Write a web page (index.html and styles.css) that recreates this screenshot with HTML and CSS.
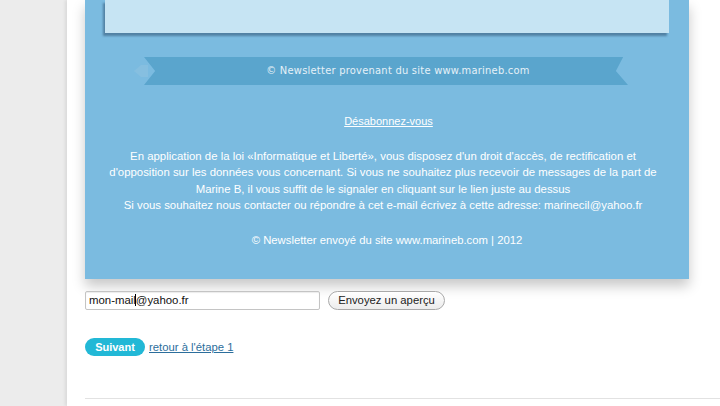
FILE: index.html
```html
<!DOCTYPE html>
<html lang="fr">
<head>
<meta charset="utf-8">
<link rel="stylesheet" href="styles.css">
</head>
<body>
<div class="page">
  <div class="gutter"></div>
  <div class="panel">
    <div class="mail">
      <div class="sheet"></div>
      <div class="ribbon-row">
        <div class="ribbon-fold"></div>
        <div class="ribbon">© Newsletter provenant du site www.marineb.com</div>
      </div>
      <p class="unsub"><a href="#">Désabonnez-vous</a></p>
      <p class="legal">En application de la loi «Informatique et Liberté», vous disposez d'un droit d'accès, de rectification et<br>d'opposition sur les données vous concernant. Si vous ne souhaitez plus recevoir de messages de la part de<br>Marine B, il vous suffit de le signaler en cliquant sur le lien juste au dessus<br>Si vous souhaitez nous contacter ou répondre à cet e-mail écrivez à cette adresse: marinecil@yahoo.fr</p>
      <p class="sent">© Newsletter envoyé du site www.marineb.com | 2012</p>
    </div>
    <div class="preview">
      <div class="field">mon-mail<span class="caret"></span>@yahoo.fr</div>
      <button class="btn-preview">Envoyez un aperçu</button>
    </div>
    <div class="nav">
      <button class="btn-next">Suivant</button>
      <a class="back" href="#">retour à l'étape 1</a>
    </div>
    <div class="rule"></div>
  </div>
</div>
</body>
</html>
```

FILE: styles.css
```css
html, body {
  margin: 0;
  padding: 0;
  height: 100%;
  overflow: hidden;
}
body {
  background: #ececec;
  font-family: "Liberation Sans", Arial, sans-serif;
}
.page {
  display: flex;
  height: 406px;
}
.gutter {
  width: 67px;
  flex: none;
}
.panel {
  flex: 1;
  background: #fff;
  box-shadow: -2px 0 3px rgba(0,0,0,0.08);
  padding-left: 18px;
  display: flex;
  flex-direction: column;
}
.mail {
  width: 604px;
  height: 279px;
  background: #7bbbe0;
  box-shadow: 0 7px 12px rgba(0,0,0,0.22);
  padding: 0 20px;
  box-sizing: border-box;
  display: flex;
  flex-direction: column;
  align-items: stretch;
}
.sheet {
  height: 33px;
  background: #c6e4f3;
  box-shadow: -2px 3px 2px rgba(30,60,90,0.45);
}
.ribbon-row {
  margin-top: 24px;
  height: 28px;
  display: flex;
  padding-left: 39px;
  position: relative;
}
.ribbon-fold {
  position: absolute;
  left: 29px;
  top: 8px;
  width: 14px;
  height: 12px;
  background: #86bfe0;
  clip-path: polygon(0 50%, 50% 0, 100% 0, 100% 100%, 50% 100%);
}
.ribbon {
  width: 484px;
  height: 28px;
  background: #5aa5cd;
  clip-path: polygon(0 0, 99% 0, 97.5% 50%, 100% 100%, 0 100%, 2.3% 50%);
  color: #e6f1f8;
  font-family: "DejaVu Sans Condensed", "DejaVu Sans", sans-serif;
  font-size: 11px;
  line-height: 28px;
  text-align: center;
  padding-left: 24px;
  box-sizing: border-box;
  letter-spacing: 0.25px;
}
.unsub {
  margin: 29px 0 0;
  text-align: center;
  font-size: 11px;
  line-height: 14px;
  padding-left: 3px;
}
.unsub a {
  color: #fff;
  text-decoration: underline;
}
.legal {
  margin: 20px -6px 0 -14px;
  text-align: center;
  color: #fff;
  font-size: 11.4px;
  line-height: 16.3px;
  white-space: nowrap;
}
.sent {
  margin: 20px 0 0;
  text-align: center;
  color: #fff;
  font-size: 11.3px;
  line-height: 14px;
}
.preview {
  margin-top: 12px;
  display: flex;
  align-items: center;
  gap: 8px;
}
.field {
  width: 235px;
  height: 19px;
  box-sizing: border-box;
  border: 1px solid #c4c4c4;
  border-radius: 2px;
  box-shadow: inset 0 1px 1px rgba(0,0,0,0.08);
  font-size: 11.4px;
  line-height: 17px;
  padding-left: 3px;
  color: #111;
  background: #fff;
}
.caret {
  display: inline-block;
  width: 1px;
  height: 12px;
  background: #000;
  vertical-align: -2px;
  margin-left: -1px;
}
.btn-preview {
  height: 19px;
  width: 117px;
  border: 1px solid #a9a9a9;
  border-radius: 10px;
  background: linear-gradient(#ffffff, #ececec);
  font-family: "Liberation Sans", Arial, sans-serif;
  font-size: 11.3px;
  color: #222;
  padding: 0;
  line-height: 17px;
}
.nav {
  margin-top: 28px;
  display: flex;
  align-items: center;
  gap: 4px;
}
.btn-next {
  width: 60px;
  height: 18px;
  border: none;
  border-radius: 9px;
  background: #22b8d6;
  color: #fff;
  font-family: "Liberation Sans", Arial, sans-serif;
  font-weight: bold;
  font-size: 11px;
  padding: 0;
}
.back {
  color: #2c6e9c;
  font-size: 11.3px;
  text-decoration: underline;
}
.rule {
  margin-top: 42px;
  height: 1px;
  background: #e2e2e2;
}
```
